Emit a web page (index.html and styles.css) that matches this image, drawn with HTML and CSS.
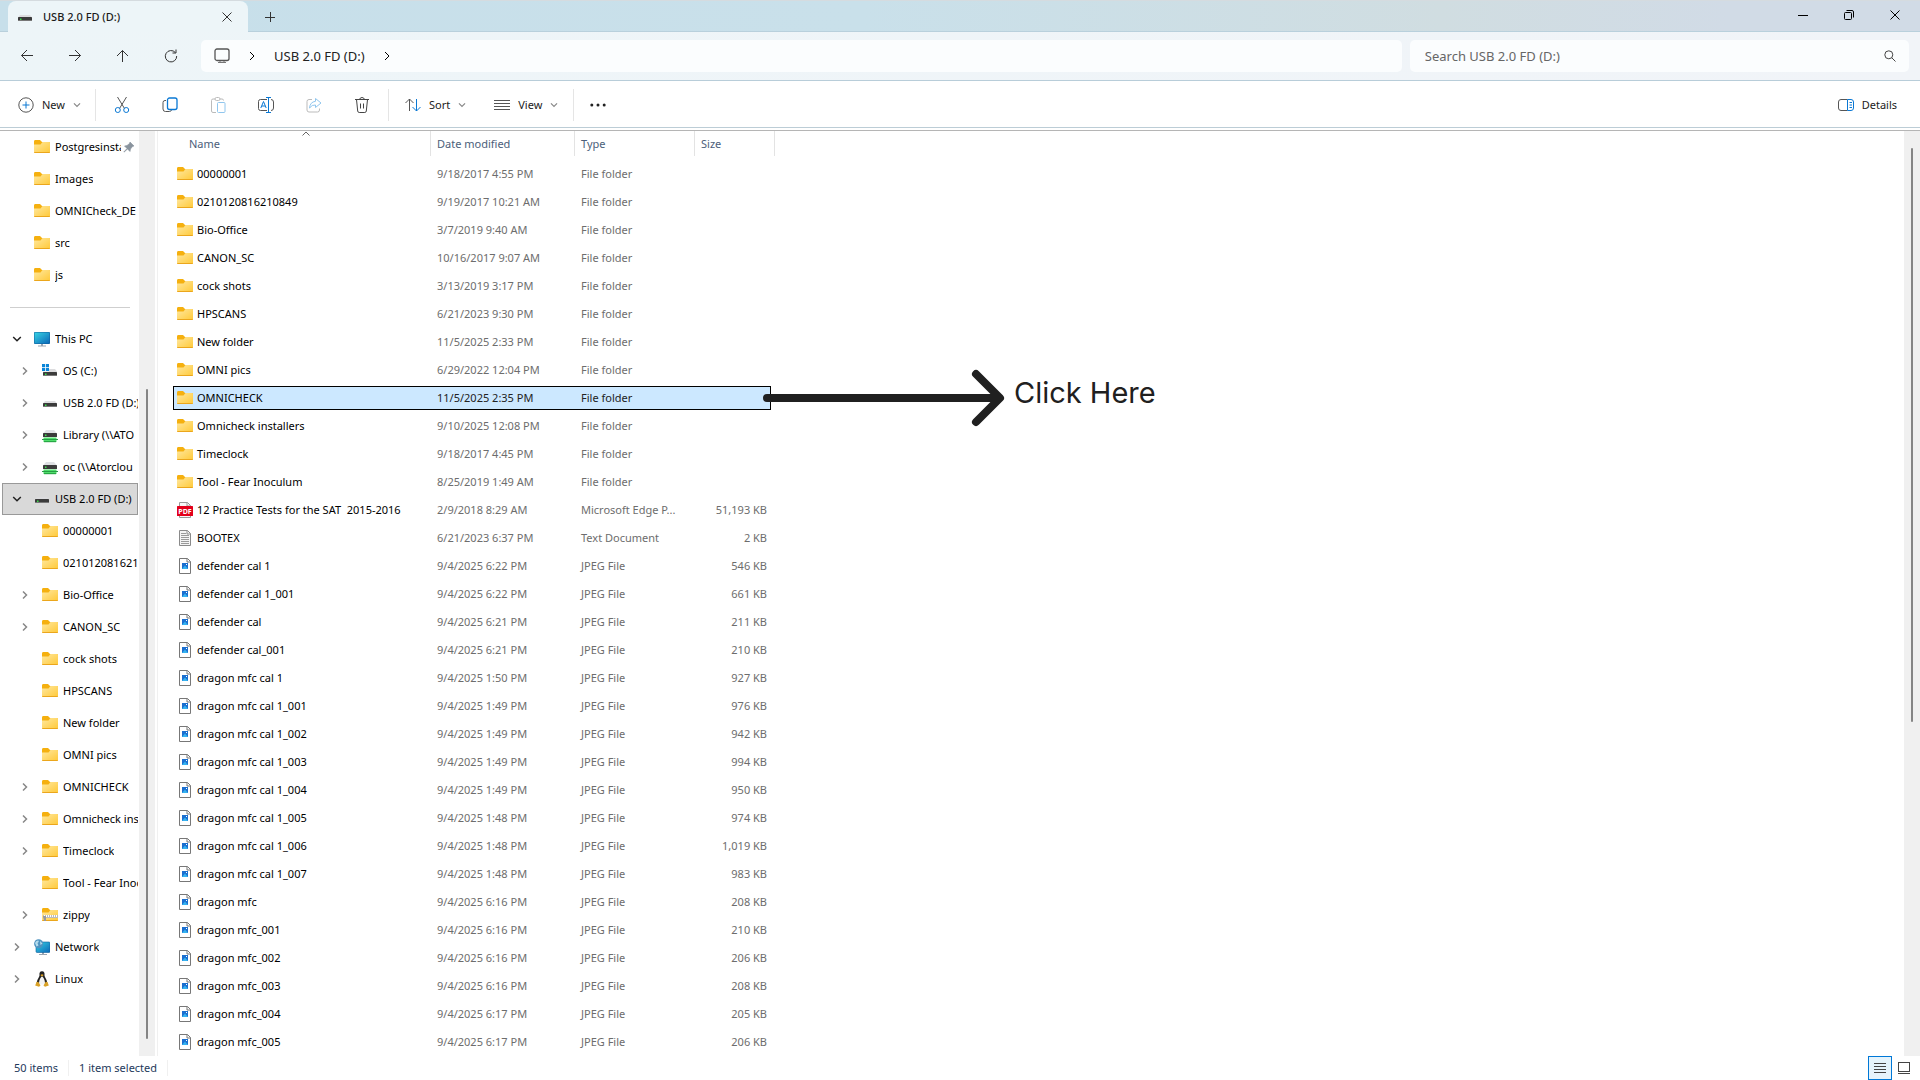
FILE: index.html
```html
<!DOCTYPE html>
<html lang="en">
<head>
  <meta charset="UTF-8">
  <title>USB 2.0 FD (D:)</title>
  <link rel="stylesheet" href="styles.css">
</head>
<body>
  <!-- Shared icons -->
  <svg class="sprite" aria-hidden="true">
    <defs>
      <linearGradient id="gFolder" x1="0" y1="0" x2="1" y2="1"><stop offset="0" stop-color="#ffe8a0"/><stop offset="1" stop-color="#ffc938"/></linearGradient>
      <linearGradient id="gScreen" x1="0" y1="0" x2="1" y2="1"><stop offset="0" stop-color="#37d3e3"/><stop offset="1" stop-color="#0b67b8"/></linearGradient>
    </defs>
    <symbol id="folder" viewBox="0 0 16 16">
      <path d="M0 2.500Q0 1 1 1H6L8 3H15Q16 3 16 4V8H0Z" fill="#f5b00f"/>
      <path d="M0 5.500H6.500L8.500 3H15.200Q16 3 16 3.800V13Q16 14 15 14H1Q0 14 0 13Z" fill="url(#gFolder)"/>
      <path d="M0 13Q0 14 1 14H15Q16 14 16 13Z" fill="#eba61c"/>
    </symbol>
    <symbol id="zip" viewBox="0 0 16 16">
      <use href="#folder"/>
      <path d="M1 9.500H16" stroke="#fff" stroke-width="3"/>
      <path d="M1 9H16M1.500 10.500H16" stroke="#777" stroke-dasharray="1 1"/>
      <path d="M1 9H4V14H2Z" fill="#999"/>
    </symbol>
    <symbol id="drive" viewBox="0 0 16 16">
      <path d="M3 6H13L15 8.500H1Z" fill="#dcdcde"/>
      <rect x="1" y="8" width="14" height="4" rx="0.6" fill="#3b3b3b"/>
      <path d="M1 11.500H15" stroke="#777"/>
      <rect x="3" y="9.500" width="1.500" height="1.500" fill="#3be04b"/>
    </symbol>
    <symbol id="osdrive" viewBox="0 0 16 16">
      <path d="M7 6H13L15 8.500V9H1V8.500H7Z" fill="#dcdcde"/>
      <rect x="1" y="9" width="14" height="4" rx="0.6" fill="#3b3b3b"/>
      <path d="M1 12.500H15" stroke="#777"/>
      <rect x="3" y="10.500" width="1.500" height="1.500" fill="#3be04b"/>
      <path d="M0 1H3.200V4.200H0ZM4 1H7V4.200H4ZM0 5H3.200V8H0ZM4 5H7V8H4Z" fill="#0a85d8"/>
    </symbol>
    <symbol id="netdrive" viewBox="0 0 16 16">
      <path d="M4 3H12L15 6.500H1Z" fill="#dfe1e4"/>
      <rect x="1" y="6" width="14" height="4" rx="0.6" fill="#3b3b3b"/>
      <rect x="3" y="7.500" width="1.500" height="1.500" fill="#3be04b"/>
      <rect x="1.500" y="10.500" width="13" height="4.500" fill="#4fdf6b"/>
      <path d="M0 12.500H16" stroke="#279b45"/>
      <path d="M2 14.700H14" stroke="#1f9a3d"/>
    </symbol>
    <symbol id="pc" viewBox="0 0 16 16">
      <path d="M7 12H9V14.500H12V15.500H4V14.500H7Z" fill="#9aa5b1"/>
      <rect y="1" width="16" height="12" rx="1" fill="#0f5f9c"/>
      <rect x="0.500" y="1.500" width="15" height="11" rx="0.5" fill="url(#gScreen)"/>
    </symbol>
    <symbol id="network" viewBox="0 0 16 16">
      <path d="M8 13H10V15H13V16H5V15H8Z" fill="#9aa5b1"/>
      <rect x="2" y="3" width="14" height="10.500" rx="1" fill="url(#gScreen)" stroke="#0f5f9c" stroke-width="0.6"/>
      <circle cx="4.600" cy="4.800" r="4.500" fill="#4f93c0"/>
      <path d="M1 4Q2 1 4.500 1.500Q5.500 3 3.500 4L4.500 6.500L2.500 7.500ZM6 2L8.500 4.500L6.500 6Z" fill="#b5dcec"/>
    </symbol>
    <symbol id="linux" viewBox="0 0 16 16">
      <path d="M8 .3C5.600 .3 5.300 2 5.500 4.200C5.600 6 2.500 9 2.800 12.500H13.200C13.500 9 10.400 6 10.500 4.200C10.700 2 10.400 .3 8 .3Z" fill="#222"/>
      <path d="M8 5.500C6.500 6 4.800 9.500 5 13.500H11C11.200 9.500 9.500 6 8 5.500Z" fill="#f3f3f3"/>
      <path d="M6.300 4L8 3.200L9.700 4L8 5.500Z" fill="#e9a820"/>
      <path d="M1.200 14.500L2.500 11L4.300 10.800L6.500 14.500L5 15.800ZM14.800 14.500L13.500 11L11.700 10.800L9.500 14.500L11 15.800Z" fill="#d9a126"/>
    </symbol>
    <symbol id="jpeg" viewBox="0 0 16 16">
      <path d="M2.500 .5H10.500L13.500 3.500V15.500H2.500Z" fill="#fff" stroke="#777"/>
      <path d="M10 .5V4H13.500" fill="none" stroke="#777"/>
      <rect x="5" y="5" width="6" height="6" fill="#1b6fd0"/>
      <path d="M5 11L8 7.500L11 11Z" fill="#35b3f0"/>
      <rect x="9" y="6" width="1" height="1" fill="#fff"/>
    </symbol>
    <symbol id="text" viewBox="0 0 16 16">
      <path d="M2.500 .5H10.500L13.500 3.500V15.500H2.500Z" fill="#f4f4f4" stroke="#8a8a8a"/>
      <path d="M10 .5V4H13.500" fill="none" stroke="#8a8a8a"/>
      <path d="M4 3.500H9M4 5.500H12M4 7.500H12M4 9.500H12M4 11.500H12M4 13.500H12" stroke="#9a9a9a"/>
    </symbol>
    <symbol id="pdf" viewBox="0 0 16 16">
      <path d="M2.500 .5H10.500L13.500 3.500V15.500H2.500Z" fill="#f8f8f8" stroke="#999"/>
      <path d="M10 .5V4H13.500" fill="none" stroke="#999"/>
      <rect y="4" width="16" height="10" rx="0.5" fill="#e3001b"/>
      <text x="8" y="11.500" text-anchor="middle" font-family="Open Sans, sans-serif" font-size="7" font-weight="700" fill="#fff">PDF</text>
    </symbol>
    <symbol id="pin" viewBox="0 0 12 12">
      <path d="M7 1L11 5L9.500 5.500L7.500 8L7 10.500L4.500 8L1 11.200L.8 11L4 7.500L1.500 5L4 4.500L6.500 2.500Z" fill="#8a949e" stroke="#8a949e" stroke-width="0.6"/>
    </symbol>
    <symbol id="chev" viewBox="0 0 10 10"><path d="M3 1.500L6.500 5L3 8.500" fill="none" stroke="currentColor" stroke-width="1.500"/></symbol>
    <symbol id="crumbchev" viewBox="0 0 10 10"><path d="M3 1L7 5L3 9" fill="none" stroke="currentColor"/></symbol>
    <symbol id="chevdown" viewBox="0 0 10 10"><path d="M1.200 3L5 6.800L8.800 3" fill="none" stroke="currentColor" stroke-width="1.500"/></symbol>
    <symbol id="close" viewBox="0 0 10 10"><path d="M.5 .5L9.500 9.500M9.500 .5L.5 9.500" stroke="currentColor"/></symbol>
  </svg>

  <div class="window">
    <!-- Tabs -->
    <header class="titlebar">
      <div class="tab">
        <svg class="icon16"><use href="#drive"/></svg>
        <span class="tab-title">USB 2.0 FD (D:)</span>
        <button class="tab-close" aria-label="Close tab"><svg class="icon10"><use href="#close"/></svg></button>
      </div>
      <button class="tab-add" aria-label="New tab"><svg class="icon10" viewBox="0 0 10 10"><path d="M5.500 0V10M0 5.500H10" stroke="currentColor"/></svg></button>
      <div class="window-buttons">
        <button aria-label="Minimize"><svg class="icon10" viewBox="0 0 10 10"><path d="M0 5.500H10" stroke="currentColor"/></svg></button>
        <button aria-label="Restore"><svg class="icon10" viewBox="0 0 10 10" fill="none" stroke="currentColor"><rect x=".5" y="2.500" width="7" height="7" rx="1"/><path d="M2.500 .5H8Q9.500 .5 9.500 2V7.500"/></svg></button>
        <button aria-label="Close"><svg class="icon10"><use href="#close"/></svg></button>
      </div>
    </header>

    <!-- Navigation and address -->
    <div class="navbar">
      <div class="nav-buttons">
        <button aria-label="Back"><svg class="icon16" viewBox="0 0 16 16"><path d="M14 7.500H2.500M8 2L2.500 7.500L8 13"/></svg></button>
        <button aria-label="Forward"><svg class="icon16" viewBox="0 0 16 16"><path d="M2 7.500H13.500M8 2L13.500 7.500L8 13"/></svg></button>
        <button aria-label="Up"><svg class="icon16" viewBox="0 0 16 16"><path d="M7.500 14V2.500M2 8L7.500 2.500L13 8"/></svg></button>
        <button aria-label="Refresh"><svg class="icon16" viewBox="0 0 16 16"><path d="M13.700 8A5.700 5.700 0 1 1 12.300 4.500M13 1.500V5H9.500"/></svg></button>
      </div>
      <nav class="address" aria-label="Address">
        <svg class="icon16" viewBox="0 0 16 16"><rect x="1" y="1" width="14" height="11.500" rx="2" fill="none" stroke="#555" stroke-width="1.300"/><path d="M6 13V15M10 13V15M4 14.500H12" stroke="#777"/></svg>
        <svg class="icon10 crumb-chev"><use href="#crumbchev"/></svg>
        <a class="crumb" href="#">USB 2.0 FD (D:)</a>
        <svg class="icon10 crumb-chev"><use href="#crumbchev"/></svg>
      </nav>
      <div class="search">
        <input type="search" placeholder="Search USB 2.0 FD (D:)" aria-label="Search">
        <svg class="icon12" viewBox="0 0 12 12"><circle cx="4.800" cy="4.800" r="4" fill="none" stroke="#444"/><path d="M7.700 7.700L11.500 11.500" stroke="#444"/></svg>
      </div>
    </div>

    <!-- Commands -->
    <div class="commands">
      <button class="cmd cmd-new"><svg class="icon16" viewBox="0 0 16 16"><circle cx="8" cy="8" r="7.200" stroke="#555"/><path d="M8 4.500V11.500M4.500 8H11.500" stroke="#0a78d4"/></svg>New<svg class="icon8"><use href="#chevdown"/></svg></button>
      <span class="sep"></span>
      <button class="cmd-icon" aria-label="Cut"><svg class="icon16" viewBox="0 0 16 16"><path d="M3.500 0L10.500 11.500M12.500 0L5.500 11.500" stroke="#555"/><circle cx="3.800" cy="13" r="2.500" stroke="#0a78d4"/><circle cx="12.200" cy="13" r="2.500" stroke="#0a78d4"/></svg></button>
      <button class="cmd-icon" aria-label="Copy"><svg class="icon16" viewBox="0 0 16 16"><path d="M4 3.500H3Q1 3.500 1 5.500V12Q1 14.500 3.500 14.500H7.500Q9 14.500 9.500 13" stroke="#555"/><rect x="5.500" y="1" width="9.500" height="11.500" rx="2" stroke="#0a78d4" stroke-width="1.300"/></svg></button>
      <button class="cmd-icon" aria-label="Paste" disabled><svg class="icon16" viewBox="0 0 16 16"><path d="M6 15.500H3Q1.500 15.500 1.500 14V3.500Q1.500 2 3 2H5M10 2H12Q13.500 2 13.500 3.500" stroke="#bbb"/><rect x="5" y=".5" width="5" height="3" rx="1.500" stroke="#bbb"/><rect x="7.500" y="5.500" width="7.500" height="10" rx="1" stroke="#90c6ee"/></svg></button>
      <button class="cmd-icon" aria-label="Rename"><svg class="icon16" viewBox="0 0 16 16"><path d="M9 2.500H2.500Q.5 2.500 .5 4.500V11.500Q.5 13.500 2.500 13.500H9M13 2.500Q15.500 2.500 15.500 5V11Q15.500 13.500 13 13.500" stroke="#555"/><path d="M10.500 .5V15.500M8 .5H13M8 15.500H13M2.800 11L5.500 4.500L8.200 11M3.800 9H7.200" stroke="#0a78d4"/></svg></button>
      <button class="cmd-icon" aria-label="Share" disabled><svg class="icon16" viewBox="0 0 16 16"><path d="M6 2.500H3Q1 2.500 1 4.500V13Q1 15 3 15H11.500Q13.500 15 13.500 13V11.500" stroke="#bbb"/><path d="M9.500 1.500L15 6L9.500 10.500V8Q6 7.500 3.500 11Q4 5 9.500 4.300Z" stroke="#90c6ee"/></svg></button>
      <button class="cmd-icon" aria-label="Delete"><svg class="icon16" viewBox="0 0 16 16"><path d="M1 2.500H15M5.500 2.500Q6 .5 8 .5T10.500 2.500M2.500 2.500L3.700 14Q3.900 15.500 5.200 15.500H10.800Q12.100 15.500 12.300 14L13.500 2.500M6.500 6.500V11.500M9.500 6.500V11.500" stroke="#444"/></svg></button>
      <span class="sep"></span>
      <button class="cmd"><svg class="icon16" viewBox="0 0 16 16"><path d="M4.500 14V2M.5 6L4.500 2L8.500 6" stroke="#555"/><path d="M11.500 2V14M7.500 10L11.500 14L15.500 10" stroke="#0a78d4"/></svg>Sort<svg class="icon8"><use href="#chevdown"/></svg></button>
      <button class="cmd cmd-view"><svg class="icon16" viewBox="0 0 16 16"><path d="M0 3.500H16M0 6.500H16M0 9.500H16M0 12.500H16" stroke="#555"/></svg>View<svg class="icon8"><use href="#chevdown"/></svg></button>
      <span class="sep"></span>
      <button class="cmd-more" aria-label="See more"><svg class="icon16" viewBox="0 0 16 16"><circle cx="1.800" cy="8" r="1.500"/><circle cx="8" cy="8" r="1.500"/><circle cx="14.200" cy="8" r="1.500"/></svg></button>
      <button class="cmd cmd-details"><svg class="icon16" viewBox="0 0 16 16"><path d="M9.500 2.500H3Q.5 2.500 .5 5V11Q.5 13.500 3 13.500H9.500" stroke="#555"/><path d="M9.500 2.500H13Q15.500 2.500 15.500 5V11Q15.500 13.500 13 13.500H9.500ZM11.500 5.500H14M11.500 8H14M11.500 10.500H14" stroke="#0a78d4"/></svg>Details</button>
    </div>

    <div class="content">
      <nav class="tree" aria-label="Folders">
        <ul id="quickList"></ul>
        <hr>
        <ul id="treeList"></ul>
      </nav>
      <div class="scroll scroll-tree"><span></span></div>

      <main class="files">
        <table>
          <colgroup><col class="col-name"><col class="col-date"><col class="col-type"><col class="col-size"></colgroup>
          <thead>
            <tr>
              <th class="name">Name<svg class="sort-mark" viewBox="0 0 8 5"><path d="M.5 4.500L4 1L7.500 4.500" fill="none" stroke="#666"/></svg></th>
              <th>Date modified</th>
              <th>Type</th>
              <th>Size</th>
            </tr>
          </thead>
          <tbody id="fileRows"></tbody>
        </table>
      </main>
      <div class="scroll scroll-files"><span></span></div>
    </div>

    <footer class="status">
      <span class="status-item">50 items</span>
      <span class="status-item">1 item selected</span>
      <div class="view-buttons">
        <button class="active" aria-label="Details view"><svg class="icon12" viewBox="0 0 12 12"><path d="M0 1.500H12M0 4.500H12M0 7.500H12M0 10.500H12" stroke="#444"/></svg></button>
        <button aria-label="Large icons"><svg class="icon12" viewBox="0 0 12 12"><rect x=".5" y=".5" width="11" height="9" fill="none" stroke="#444"/><path d="M0 11.500H12" stroke="#444"/></svg></button>
      </div>
    </footer>
  </div>

  <template id="callout">
    <div class="callout">
      <svg class="callout-arrow" viewBox="0 0 244 58"><path d="M5 29H236M214 5L238 29L214 53"/></svg>
      <span>Click Here</span>
    </div>
  </template>

  <script>
    const quick = ['Postgresinsta', 'Images', 'OMNICheck_DE', 'src', 'js'];

    // level, arrow (0 none, 1 closed, 2 open), icon, name, selected
    const tree = [
      [0, 2, 'pc', 'This PC'],
      [1, 1, 'osdrive', 'OS (C:)'],
      [1, 1, 'drive', 'USB 2.0 FD (D:)'],
      [1, 1, 'netdrive', 'Library (\\\\ATO'],
      [1, 1, 'netdrive', 'oc (\\\\Atorclou'],
      [0, 2, 'drive', 'USB 2.0 FD (D:)', true],
      [1, 0, 'folder', '00000001'],
      [1, 0, 'folder', '0210120816210849'],
      [1, 1, 'folder', 'Bio-Office'],
      [1, 1, 'folder', 'CANON_SC'],
      [1, 0, 'folder', 'cock shots'],
      [1, 0, 'folder', 'HPSCANS'],
      [1, 0, 'folder', 'New folder'],
      [1, 0, 'folder', 'OMNI pics'],
      [1, 1, 'folder', 'OMNICHECK'],
      [1, 1, 'folder', 'Omnicheck installers'],
      [1, 1, 'folder', 'Timeclock'],
      [1, 0, 'folder', 'Tool - Fear Inoculum'],
      [1, 1, 'zip', 'zippy'],
      [0, 1, 'network', 'Network'],
      [0, 1, 'linux', 'Linux']
    ];

    const types = { folder: 'File folder', pdf: 'Microsoft Edge P...', text: 'Text Document', jpeg: 'JPEG File' };

    const files = [
      ['folder', '00000001', '9/18/2017 4:55 PM'],
      ['folder', '0210120816210849', '9/19/2017 10:21 AM'],
      ['folder', 'Bio-Office', '3/7/2019 9:40 AM'],
      ['folder', 'CANON_SC', '10/16/2017 9:07 AM'],
      ['folder', 'cock shots', '3/13/2019 3:17 PM'],
      ['folder', 'HPSCANS', '6/21/2023 9:30 PM'],
      ['folder', 'New folder', '11/5/2025 2:33 PM'],
      ['folder', 'OMNI pics', '6/29/2022 12:04 PM'],
      ['folder', 'OMNICHECK', '11/5/2025 2:35 PM', '', true],
      ['folder', 'Omnicheck installers', '9/10/2025 12:08 PM'],
      ['folder', 'Timeclock', '9/18/2017 4:45 PM'],
      ['folder', 'Tool - Fear Inoculum', '8/25/2019 1:49 AM'],
      ['pdf', '12 Practice Tests for the SAT  2015-2016', '2/9/2018 8:29 AM', '51,193 KB'],
      ['text', 'BOOTEX', '6/21/2023 6:37 PM', '2 KB'],
      ['jpeg', 'defender cal 1', '9/4/2025 6:22 PM', '546 KB'],
      ['jpeg', 'defender cal 1_001', '9/4/2025 6:22 PM', '661 KB'],
      ['jpeg', 'defender cal', '9/4/2025 6:21 PM', '211 KB'],
      ['jpeg', 'defender cal_001', '9/4/2025 6:21 PM', '210 KB'],
      ['jpeg', 'dragon mfc cal 1', '9/4/2025 1:50 PM', '927 KB'],
      ['jpeg', 'dragon mfc cal 1_001', '9/4/2025 1:49 PM', '976 KB'],
      ['jpeg', 'dragon mfc cal 1_002', '9/4/2025 1:49 PM', '942 KB'],
      ['jpeg', 'dragon mfc cal 1_003', '9/4/2025 1:49 PM', '994 KB'],
      ['jpeg', 'dragon mfc cal 1_004', '9/4/2025 1:49 PM', '950 KB'],
      ['jpeg', 'dragon mfc cal 1_005', '9/4/2025 1:48 PM', '974 KB'],
      ['jpeg', 'dragon mfc cal 1_006', '9/4/2025 1:48 PM', '1,019 KB'],
      ['jpeg', 'dragon mfc cal 1_007', '9/4/2025 1:48 PM', '983 KB'],
      ['jpeg', 'dragon mfc', '9/4/2025 6:16 PM', '208 KB'],
      ['jpeg', 'dragon mfc_001', '9/4/2025 6:16 PM', '210 KB'],
      ['jpeg', 'dragon mfc_002', '9/4/2025 6:16 PM', '206 KB'],
      ['jpeg', 'dragon mfc_003', '9/4/2025 6:16 PM', '208 KB'],
      ['jpeg', 'dragon mfc_004', '9/4/2025 6:17 PM', '205 KB'],
      ['jpeg', 'dragon mfc_005', '9/4/2025 6:17 PM', '206 KB']
    ];

    const icon = name => `<svg class="icon16"><use href="#${name}"/></svg>`;

    document.getElementById('quickList').innerHTML = quick.map((name, i) => `
      <li class="node">
        <span class="toggle"></span>
        <a href="#">${icon('folder')}<span class="label">${name}</span></a>
        ${i === 0 ? '<svg class="pin"><use href="#pin"/></svg>' : ''}
      </li>`).join('');

    document.getElementById('treeList').innerHTML = tree.map(([level, arrow, ico, name, selected]) => `
      <li class="node level${level}${selected ? ' selected' : ''}">
        ${arrow ? `<button class="toggle${arrow === 2 ? ' open' : ''}" aria-label="Toggle ${name}"><svg class="icon10"><use href="#${arrow === 2 ? 'chevdown' : 'chev'}"/></svg></button>` : '<span class="toggle"></span>'}
        <a href="#">${icon(ico)}<span class="label">${name}</span></a>
      </li>`).join('');

    document.getElementById('fileRows').innerHTML = files.map(([ico, name, date, size = '', selected]) => `
      <tr${selected ? ' class="selected"' : ''}>
        <td><div class="file-name">${icon(ico)}<span>${name}</span></div></td>
        <td>${date}</td>
        <td>${types[ico]}</td>
        <td class="size">${size}</td>
      </tr>`).join('');

    const callout = document.getElementById('callout').content.firstElementChild;
    document.querySelector('tr.selected .size').append(callout.cloneNode(true));
  </script>
</body>
</html>
```
FILE: styles.css
```css
* { box-sizing: border-box; margin: 0; padding: 0; }

body {
  font-family: "Noto Sans", "Open Sans", sans-serif;
  font-size: 11px;
  line-height: 16px;
  color: #000;
  background: #fff;
}

button {
  border: none;
  background: none;
  font: inherit;
  color: inherit;
}
a {
  color: inherit;
  text-decoration: none;
}
ul { list-style: none; }
svg { flex: none; display: block; }

.sprite { position: absolute; width: 0; height: 0; }
.icon8 { width: 8px; height: 8px; }
.icon10 { width: 10px; height: 10px; }
.icon12 { width: 12px; height: 12px; }
.icon16 { width: 16px; height: 16px; }

.window {
  display: flex;
  flex-direction: column;
  height: 100vh;
  overflow: hidden;
}

/* Title bar */
.titlebar {
  display: flex;
  height: 32px;
  flex: none;
  background: linear-gradient(90deg, #c7dfea 0%, #c9e0ea 45%, #d0dde1 75%, #d1dbe6 90%);
  border-top: 1px solid #d5dbdf;
  box-shadow: inset 0 -1px #b9d0dc;
}
.tab {
  display: flex;
  align-items: center;
  width: 240px;
  margin-left: 8px;
  padding: 0 11px 0 9px;
  background: #edf5f8;
  border-radius: 8px 8px 0 0;
}
.tab-title {
  flex: 1;
  margin-left: 10px;
  font-weight: 500;
  color: #1b1b1b;
}
.tab-close, .tab-add {
  display: grid;
  place-items: center;
  width: 20px;
  color: #333;
}
.tab-add { margin-left: 12px; }
.window-buttons {
  display: flex;
  margin-left: auto;
  padding-right: 2px;
}
.window-buttons button {
  display: grid;
  place-items: center;
  width: 46px;
  padding-bottom: 4px;
}

/* Navigation bar */
.navbar {
  display: flex;
  align-items: center;
  height: 49px;
  flex: none;
  padding: 0 11px 0 3px;
  background: linear-gradient(90deg, #edf5f8, #f1f4f8);
  border-bottom: 1px solid #b8cdd9;
}
.nav-buttons { display: flex; margin-right: 6px; }
.nav-buttons button {
  display: grid;
  place-items: center;
  width: 48px;
  height: 32px;
}
.nav-buttons svg { fill: none; stroke: #333; }
.address, .search {
  display: flex;
  align-items: center;
  height: 32px;
  border-radius: 5px;
  background: #fbfdfe;
}
.address {
  flex: 1;
  padding-left: 13px;
  margin-right: 8px;
}
.crumb-chev { margin-left: 17px; }
.crumb {
  margin-left: 17px;
  font-size: 13px;
  color: #222;
}
.search {
  width: 26vw;
  padding: 0 13px 0 15px;
}
.search input {
  flex: 1;
  min-width: 0;
  border: none;
  outline: none;
  background: none;
  font: inherit;
  font-size: 13px;
}
.search input::placeholder { color: #666; opacity: 1; }

/* Command bar */
.commands {
  display: flex;
  align-items: center;
  height: 47px;
  flex: none;
  padding: 2px 15px 0 10px;
  border-bottom: 1px solid #bccdd6;
  color: #1b1b1b;
}
.commands svg { fill: none; }
.commands .icon8 { color: #888; }
.commands .cmd-more svg { fill: #222; }
.cmd, .cmd-more {
  display: flex;
  align-items: center;
  gap: 8px;
  height: 32px;
  padding: 0 8px;
}
.cmd-new { margin-right: 4px; }
.cmd-view { margin: 0 5px 0 12px; }
.cmd-details { margin-left: auto; }
.cmd-icon {
  display: grid;
  place-items: center;
  width: 48px;
  height: 32px;
}
.sep {
  width: 1px;
  height: 32px;
  margin: 0 2px;
  background: #e5e5e5;
}
.sep + .cmd, .sep + .cmd-more { margin-left: 6px; }

/* Content */
.content {
  display: flex;
  flex: 1;
  min-height: 0;
  margin-top: 2px;
  border-top: 1px solid #b5b5b5;
}
.tree {
  width: 139px;
  flex: none;
  overflow: hidden;
}
.tree hr {
  margin: 16px 9px 15px 10px;
  border: none;
  border-top: 1px solid #cfcfcf;
}
.node {
  display: flex;
  align-items: center;
  height: 32px;
  padding: 0 1px 0 7px;
}
.node.level1 { padding-left: 15px; }
.node.selected {
  margin: 0 1px 0 2px;
  padding: 0 0 0 4px;
  background: #d9d9d9;
  border: 1px solid #999;
}
.node a {
  display: flex;
  align-items: center;
  gap: 5px;
  min-width: 0;
}
.label {
  overflow: hidden;
  white-space: nowrap;
}
.toggle {
  display: grid;
  place-items: center;
  width: 20px;
  height: 20px;
  margin-right: 7px;
  flex: none;
  color: #888;
}
.toggle.open { color: #222; }
.pin {
  width: 12px;
  height: 12px;
  margin: 0 3px 0 2px;
}

.scroll {
  width: 16px;
  flex: none;
  display: flex;
  justify-content: center;
  background: #f0f0f0;
}
.scroll span {
  width: 2px;
  border-radius: 1px;
  background: #858585;
}
.scroll-tree span { margin: 258px 0 17px; }
.scroll-files span { margin-top: 17px; height: 62%; }

/* File list */
.files {
  flex: 1;
  min-width: 0;
  overflow: hidden;
  margin-left: 2px;
  padding-left: 15px;
  border-left: 1px solid #f0f0f0;
}
table {
  width: 602px;
  table-layout: fixed;
  border-collapse: separate;
  border-spacing: 0;
}
.col-name { width: 258px; }
.col-date { width: 144px; }
.col-type { width: 120px; }
.col-size { width: 80px; }
th {
  position: relative;
  height: 29px;
  padding-left: 6px;
  border-bottom: 4px solid transparent;
  box-shadow: inset -1px 0 #e3e3e3;
  text-align: left;
  font-weight: 400;
  color: #4c607a;
}
th.name { padding-left: 16px; }
.sort-mark {
  position: absolute;
  top: 0;
  left: 50%;
  width: 8px;
  height: 5px;
}
td {
  height: 28px;
  padding-left: 6px;
  border: solid transparent;
  border-width: 2px 0;
  background-clip: padding-box;
  white-space: pre;
  color: #6d6d6d;
}
td:first-child { padding-left: 4px; color: #000; }
td.size {
  position: relative;
  padding: 0 4px 0 0;
  border-right-width: 4px;
  text-align: right;
}
.file-name {
  display: flex;
  align-items: center;
  gap: 4px;
}
tr.selected td {
  background-color: #cce8ff;
  box-shadow: inset 0 1px #000, inset 0 -1px #000;
  color: #222;
}
tr.selected td:first-child { box-shadow: inset 0 1px #000, inset 0 -1px #000, inset 1px 0 #000; color: #000; }
tr.selected td:last-child { box-shadow: inset 0 1px #000, inset 0 -1px #000, inset -1px 0 #000; }

/* Callout beside the selected row */
.callout {
  position: absolute;
  left: calc(100% - 9px);
  top: -17px;
  display: flex;
  gap: 8px;
  font-family: Inter, sans-serif;
  font-size: 29px;
  line-height: 48px;
  color: #202020;
}
.callout-arrow {
  width: 244px;
  height: 58px;
  fill: none;
  stroke: #202020;
  stroke-width: 8px;
  stroke-linecap: round;
  stroke-linejoin: round;
}

/* Status bar */
.status {
  display: flex;
  align-items: center;
  height: 24px;
  flex: none;
  padding: 0 4px 0 14px;
  color: #1e395b;
}
.status-item {
  padding-right: 10px;
  margin-right: 10px;
  border-right: 1px solid #f0f0f0;
}
.view-buttons { display: flex; margin-left: auto; }
.view-buttons button {
  display: grid;
  place-items: center;
  width: 24px;
  height: 24px;
}
.view-buttons .active {
  border: 1px solid #0078d7;
  background: #e5f3fb;
}
```
